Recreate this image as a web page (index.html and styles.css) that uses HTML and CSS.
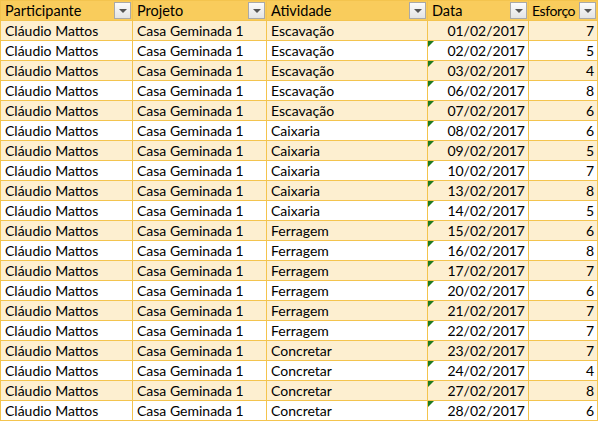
FILE: index.html
```html
<!DOCTYPE html>
<html lang="pt">
<head>
    <meta charset="UTF-8">
    <title>Esforço por atividade</title>
    <link rel="stylesheet" href="styles.css">
</head>
<body>
    <table class="sheet">
        <colgroup>
            <col class="c-part">
            <col class="c-proj">
            <col class="c-ativ">
            <col class="c-data">
            <col class="c-esf">
        </colgroup>
        <thead>
            <tr>
                <th><div class="head">Participante<span class="filter"></span></div></th>
                <th><div class="head">Projeto<span class="filter"></span></div></th>
                <th><div class="head">Atividade<span class="filter"></span></div></th>
                <th><div class="head">Data<span class="filter"></span></div></th>
                <th class="tight"><div class="head">Esforço<span class="filter"></span></div></th>
            </tr>
        </thead>
        <tbody id="rows"></tbody>
    </table>

    <script>
        const data = [
            ['Escavação', '01/02/2017', 7],
            ['Escavação', '02/02/2017', 5],
            ['Escavação', '03/02/2017', 4],
            ['Escavação', '06/02/2017', 8],
            ['Escavação', '07/02/2017', 6],
            ['Caixaria', '08/02/2017', 6],
            ['Caixaria', '09/02/2017', 5],
            ['Caixaria', '10/02/2017', 7],
            ['Caixaria', '13/02/2017', 8],
            ['Caixaria', '14/02/2017', 5],
            ['Ferragem', '15/02/2017', 6],
            ['Ferragem', '16/02/2017', 8],
            ['Ferragem', '17/02/2017', 7],
            ['Ferragem', '20/02/2017', 6],
            ['Ferragem', '21/02/2017', 7],
            ['Ferragem', '22/02/2017', 7],
            ['Concretar', '23/02/2017', 7],
            ['Concretar', '24/02/2017', 4],
            ['Concretar', '27/02/2017', 8],
            ['Concretar', '28/02/2017', 6]
        ];

        const tbody = document.getElementById('rows');
        data.forEach((row, i) => {
            const tr = document.createElement('tr');
            const warn = i > 0 ? ' warn' : '';
            tr.innerHTML =
                '<td>Cláudio Mattos</td>' +
                '<td>Casa Geminada 1</td>' +
                '<td>' + row[0] + '</td>' +
                '<td class="num' + warn + '">' + row[1] + '</td>' +
                '<td class="num">' + row[2] + '</td>';
            tbody.appendChild(tr);
        });
    </script>
</body>
</html>
```

FILE: styles.css
```css
body {
    margin: 0;
    background: #ffffff;
    font-family: Lato, "Liberation Sans", sans-serif;
    font-size: 14px;
    color: #000000;
}

.sheet {
    border-collapse: collapse;
    table-layout: fixed;
    width: 597px;
}

.c-part { width: 132px; }
.c-proj { width: 134px; }
.c-ativ { width: 161px; }
.c-data { width: 101px; }
.c-esf  { width: 69px; }

.sheet th,
.sheet td {
    height: 19px;
    padding: 0 3px 0 4px;
    border: 1px solid #f4c44e;
    line-height: 19px;
    white-space: nowrap;
    overflow: hidden;
    font-weight: normal;
    text-align: left;
}

.sheet th {
    background: #f9cc5c;
    padding-right: 1px;
    font-size: 14.5px;
}

.sheet th.tight {
    padding-left: 3px;
    font-size: 14px;
    letter-spacing: -0.4px;
}

.sheet tbody tr:nth-child(odd) td {
    background: #fdefd0;
}

.head {
    display: flex;
    justify-content: space-between;
    align-items: center;
    gap: 1px;
}

.filter {
    width: 15px;
    height: 15px;
    border: 1px solid #a9a9a9;
    background: linear-gradient(#fbfbfb, #e4e4e4);
    position: relative;
    flex: none;
}

.filter::after {
    content: "";
    position: absolute;
    left: 4px;
    top: 6px;
    border-left: 4px solid transparent;
    border-right: 4px solid transparent;
    border-top: 4px solid #555555;
}

.num {
    text-align: right !important;
}

.warn {
    position: relative;
}

.warn::before {
    content: "";
    position: absolute;
    left: 0;
    top: 0;
    border-top: 6px solid #1e7a1e;
    border-right: 6px solid transparent;
}
```
